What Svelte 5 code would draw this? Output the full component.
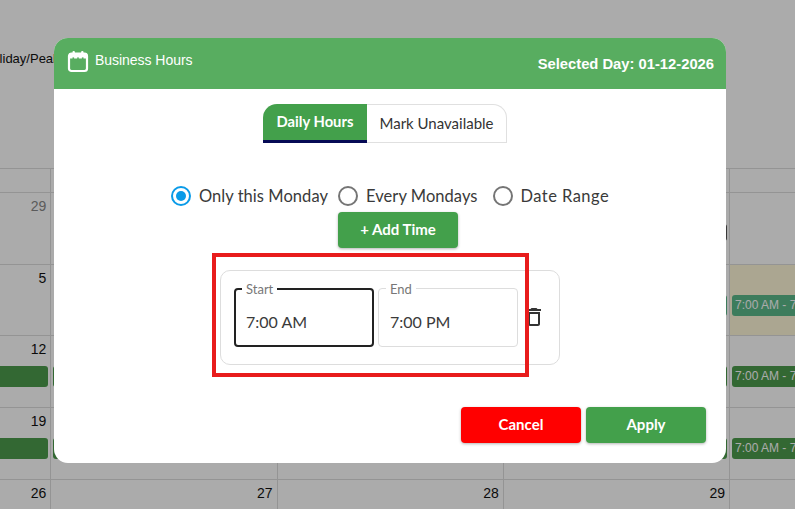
<script>
  const rows = [
    { days: ['29', '30', '31', '1', '2'], muted: true, events: [false, false, false, false, false], tag: true },
    { days: ['5', '6', '7', '8', '9'], events: [false, false, false, true, true], today: true },
    { days: ['12', '13', '14', '15', '16'], events: [true, true, false, true, true] },
    { days: ['19', '20', '21', '22', '23'], events: [true, true, false, true, true] },
    { days: ['26', '27', '28', '29', '30'], events: [false, false, false, false, false] }
  ];
</script>

<div class="page">
  <div class="calendar">
    <div class="legend">Holiday/Peak</div>
    <div class="head-row">
      {#each [0, 1, 2, 3, 4] as c (c)}<div class="head-cell"></div>{/each}
    </div>
    {#each rows as row, r (r)}
      <div class="week">
        {#each row.days as day, c (c)}
          <div class="cell" class:today={row.today && c === 4}>
            <span class="num" class:muted={row.muted && c === 0}>{day}</span>
            {#if row.events[c]}
              <div class="event" class:teal={row.today}>7:00 AM - 7:00 PM</div>
            {/if}
            {#if row.tag && c === 3}
              <div class="tag"></div>
            {/if}
          </div>
        {/each}
      </div>
    {/each}
  </div>

  <div class="overlay"></div>

  <section class="modal">
    <header class="modal-head">
      <div class="title">
        <svg class="cal-icon" viewBox="0 0 22 24" width="22" height="24" aria-hidden="true">
          <rect x="2" y="4.5" width="18" height="17.5" rx="2.5" fill="none" stroke="#fff" stroke-width="2.2" />
          <rect x="2" y="4.5" width="18" height="5" fill="#fff" />
          <rect x="5.5" y="2" width="2.4" height="4" rx="1" fill="#fff" />
          <rect x="14.1" y="2" width="2.4" height="4" rx="1" fill="#fff" />
          <rect x="5.5" y="8.4" width="1.6" height="1.6" fill="#58ad60" />
          <rect x="10.2" y="8.4" width="1.6" height="1.6" fill="#58ad60" />
          <rect x="14.9" y="8.4" width="1.6" height="1.6" fill="#58ad60" />
        </svg>
        <span>Business Hours</span>
      </div>
      <div class="selected">Selected Day: 01-12-2026</div>
    </header>

    <div class="tabs">
      <button class="tab active">Daily Hours</button>
      <button class="tab">Mark Unavailable</button>
    </div>

    <div class="radios">
      <label class="radio"><span class="ring on"><span class="dot"></span></span>Only this Monday</label>
      <label class="radio every"><span class="ring"></span>Every Mondays</label>
      <label class="radio range"><span class="ring"></span>Date Range</label>
    </div>

    <button class="btn add">+ Add Time</button>

    <div class="card">
      <div class="field focused">
        <span class="legend-label">Start</span>
        <span class="value">7:00 AM</span>
      </div>
      <div class="field">
        <span class="legend-label">End</span>
        <span class="value">7:00 PM</span>
      </div>
      <svg class="trash" viewBox="0 0 24 24" width="24" height="24" aria-hidden="true">
        <path fill="#333" d="M6 19c0 1.1.9 2 2 2h8c1.1 0 2-.9 2-2V7H6v12zM8 9h8v10H8V9zm7.5-5l-1-1h-5l-1 1H5v2h14V4z" />
      </svg>
    </div>

    <div class="actions">
      <button class="btn cancel">Cancel</button>
      <button class="btn">Apply</button>
    </div>

    <div class="highlight"></div>
  </section>
</div>

<style>
  :global(body) {
    margin: 0;
    background: #fff;
  }
  .page {
    position: relative;
    width: 795px;
    height: 509px;
    overflow: hidden;
    font-family: Lato, "Open Sans", sans-serif;
  }
  .calendar {
    width: 1140px;
    margin-left: -175px;
    padding-top: 51px;
    font-family: "Liberation Sans", Arial, sans-serif;
    color: #111;
  }
  .legend {
    height: 117.2px;
    margin-left: 158px;
    font-size: 13px;
    line-height: 16px;
  }
  .head-row,
  .week {
    display: grid;
    grid-template-columns: repeat(5, 226.25px);
  }
  .head-row {
    height: 24px;
    border-top: 1px solid #ddd;
    box-sizing: border-box;
  }
  .head-cell {
    border-right: 1px solid #ddd;
  }
  .week {
    height: 71.6px;
  }
  .cell {
    box-sizing: border-box;
    border-top: 1px solid #ddd;
    border-right: 1px solid #ddd;
    padding: 4px 2px 0 2px;
    position: relative;
    text-align: right;
  }
  .cell.today {
    background: #fff8d8;
  }
  .num {
    display: block;
    font-size: 14px;
    line-height: 18px;
    height: 26px;
    padding-right: 2px;
  }
  .num.muted {
    color: #888;
  }
  .event {
    box-sizing: border-box;
    height: 21px;
    padding-left: 3px;
    border-radius: 3px;
    background: #4c9c4c;
    color: #fff;
    text-align: left;
    font-size: 12px;
    line-height: 21px;
    white-space: nowrap;
    overflow: hidden;
  }
  .event.teal {
    background: #5cb98a;
  }
  .tag {
    position: absolute;
    right: 2px;
    top: 31px;
    width: 20px;
    height: 17px;
    border-radius: 3px;
    background: #555;
  }
  .overlay {
    position: absolute;
    inset: 0;
    background: rgba(0, 0, 0, 0.33);
  }
  .modal {
    position: absolute;
    left: 54px;
    top: 38px;
    width: 672px;
    height: 425px;
    background: #fff;
    border-radius: 14px;
    display: flex;
    flex-direction: column;
    align-items: center;
    color: #333;
  }
  .modal-head {
    box-sizing: border-box;
    align-self: stretch;
    height: 51px;
    background: #58ad60;
    border-radius: 14px 14px 0 0;
    display: flex;
    justify-content: space-between;
    padding: 0 12px 0 13px;
    color: #fff;
    font-family: "Liberation Sans", Arial, sans-serif;
    font-size: 14px;
  }
  .title {
    display: flex;
    align-items: flex-start;
    gap: 6px;
    padding-top: 11px;
  }
  .title span {
    line-height: 22px;
    letter-spacing: -0.04px;
  }
  .cal-icon {
    flex: none;
  }
  .selected {
    font-size: 14.75px;
    font-weight: 700;
    padding-top: 17px;
    line-height: 18px;
  }
  .tabs {
    display: flex;
    margin: 15px 10px 0 0;
    height: 39px;
  }
  .tab {
    box-sizing: border-box;
    font: 400 15px Lato, sans-serif;
    color: #333;
    background: #fff;
    border: 1px solid #e0e0e0;
    border-left: 0;
    width: 140px;
    padding: 0 0 2px;
    border-radius: 0 14px 0 0;
  }
  .tab.active {
    width: 104px;
    background: #43a04b;
    color: #fff;
    font-size: 14.75px;
    font-weight: 700;
    border: 0;
    border-bottom: 3px solid #060a55;
    border-radius: 14px 0 0 0;
  }
  .radios {
    display: flex;
    gap: 10px;
    margin-top: 39px;
    height: 28px;
    align-items: center;
  }
  .radio {
    display: flex;
    align-items: center;
    gap: 8px;
    font-size: 16.5px;
    letter-spacing: 0.05px;
    color: #3a3a3a;
  }
  .radio.every {
    margin-right: 5px;
  }
  .radio.range {
    letter-spacing: 0.45px;
  }
  .ring {
    box-sizing: border-box;
    width: 20px;
    height: 20px;
    border: 2px solid #757575;
    border-radius: 50%;
    display: flex;
    align-items: center;
    justify-content: center;
  }
  .ring.on {
    border-color: #0a9be8;
  }
  .dot {
    width: 10px;
    height: 10px;
    border-radius: 50%;
    background: #0a9be8;
  }
  .btn {
    width: 120px;
    height: 36px;
    padding: 0 0 2px;
    border: 0;
    border-radius: 4px;
    background: #43a04b;
    color: #fff;
    font: 700 15px Lato, sans-serif;
    box-shadow: 0 1px 3px rgba(0, 0, 0, 0.3);
  }
  .btn.add {
    margin: 2px 0 0 16px;
  }
  .btn.cancel {
    background: #ff0000;
  }
  .card {
    box-sizing: border-box;
    width: 340px;
    height: 95px;
    margin-top: 22px;
    border: 1px solid #ddd;
    border-radius: 10px;
    display: flex;
    align-items: center;
    padding: 0 0 0 13px;
    gap: 4px;
  }
  .field {
    position: relative;
    box-sizing: border-box;
    width: 140px;
    height: 59px;
    border: 1px solid #ddd;
    border-radius: 4px;
    padding: 23px 0 0 11px;
    font-size: 16px;
    line-height: 20px;
    color: #3a3a3a;
  }
  .field.focused {
    border: 2px solid #222;
    padding: 22px 0 0 10px;
  }
  .legend-label {
    position: absolute;
    left: 7px;
    top: -7px;
    padding: 0 4px;
    background: #fff;
    font-size: 13px;
    line-height: 14px;
    color: #777;
  }
  .field.focused .legend-label {
    left: 6px;
    top: -8px;
  }
  .trash {
    margin: -2px 0 0 0;
  }
  .actions {
    display: flex;
    gap: 5px;
    align-self: flex-end;
    margin: 42px 20px 0 0;
  }
  .highlight {
    position: absolute;
    left: 158px;
    top: 215px;
    width: 317px;
    height: 124px;
    box-sizing: border-box;
    border: 4px solid #e81c1c;
    pointer-events: none;
  }
</style>
